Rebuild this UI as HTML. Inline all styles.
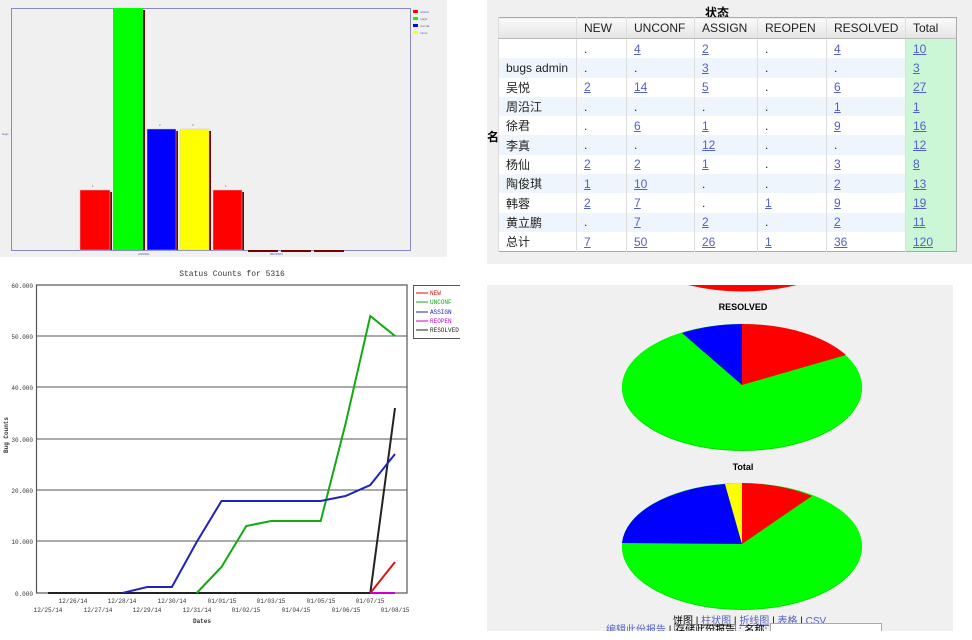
<!DOCTYPE html>
<html><head><meta charset="utf-8"><style>
body{margin:0;width:972px;height:640px;background:#fff;position:relative;overflow:hidden;font-family:"Liberation Sans","Noto Sans CJK SC",sans-serif}
.abs{position:absolute}
table{border-collapse:collapse;font-size:12px;color:#222;table-layout:fixed}
td,th{padding:0 0 0 7px;text-align:left;height:19.3px;border-left:1px solid #ddd;overflow:hidden;white-space:nowrap}
th{font-weight:normal;height:20px;background:linear-gradient(#fafafa,#e4e4e4);border-bottom:1px solid #bbb}
tr.o td{background:#eef5fd}
tr td.t{background:#ccf7d6}
a{color:#5560c8;text-decoration:underline}
</style></head><body>
<!-- top-left bar chart -->
<div class="abs" style="left:0;top:0;width:447px;height:257px;background:#f0f0f0"></div>
<svg class="abs" style="left:0;top:0" width="460" height="260">
<rect x="11.5" y="8.5" width="399" height="242" fill="none" stroke="#8888cc" stroke-width="1"/>
<g fill="#700">
<rect x="110" y="192" width="2" height="58"/><rect x="143" y="10" width="2" height="240"/><rect x="176" y="131" width="2" height="119"/><rect x="209" y="131" width="2" height="119"/><rect x="242" y="192" width="2" height="58"/>
<rect x="248" y="250" width="30" height="2"/><rect x="281" y="250" width="30" height="2"/><rect x="314" y="250" width="30" height="2"/></g>
<rect x="80" y="190" width="30" height="60" fill="#f00" stroke="#ccc" stroke-width=".5"/>
<rect x="113" y="8" width="30" height="242" fill="#0f0"/>
<rect x="147" y="129" width="29" height="121" fill="#00f" stroke="#ccc" stroke-width=".5"/>
<rect x="180" y="129" width="29" height="121" fill="#ff0" stroke="#ccc" stroke-width=".5"/>
<rect x="213" y="190" width="29" height="60" fill="#f00" stroke="#ccc" stroke-width=".5"/>
<g fill="#55a" font-size="3"><text x="92" y="187">1</text><text x="159" y="126">2</text><text x="192" y="126">2</text><text x="225" y="187">1</text><text x="138" y="255">ASSIGN</text><text x="270" y="255">REOPEN</text><text x="2" y="135">bugs</text></g>
<rect x="413" y="10" width="5" height="3" fill="#f00"/><rect x="413" y="17" width="5" height="3" fill="#0f0"/><rect x="413" y="24" width="5" height="3" fill="#00f"/><rect x="413" y="31" width="5" height="3" fill="#ff0"/>
<g fill="#55a" font-size="3"><text x="420" y="13">critical</text><text x="420" y="20">major</text><text x="420" y="27">normal</text><text x="420" y="34">minor</text></g>
</svg>
<!-- top-right table -->
<div class="abs" style="left:487px;top:0;width:485px;height:264px;background:#f0f0f0"></div>
<div class="abs" style="left:705px;top:4px;font-size:12px;font-weight:bold">状态</div>
<div class="abs" style="left:487px;top:128px;font-size:12px;font-weight:bold">名</div>
<table class="abs" style="left:498px;top:17px;width:459px;border:1px solid #aaa;background:#fff">
<colgroup><col style="width:78px"><col style="width:50px"><col style="width:68px"><col style="width:63px"><col style="width:69px"><col style="width:79px"><col></colgroup>
<tr><th></th><th>NEW</th><th>UNCONF</th><th>ASSIGN</th><th>REOPEN</th><th>RESOLVED</th><th>Total</th></tr>
<tr><td></td><td>.</td><td><a>4</a></td><td><a>2</a></td><td>.</td><td><a>4</a></td><td class="t"><a>10</a></td></tr>
<tr class="o"><td>bugs admin</td><td>.</td><td>.</td><td><a>3</a></td><td>.</td><td>.</td><td class="t"><a>3</a></td></tr>
<tr><td>吴悦</td><td><a>2</a></td><td><a>14</a></td><td><a>5</a></td><td>.</td><td><a>6</a></td><td class="t"><a>27</a></td></tr>
<tr class="o"><td>周沿江</td><td>.</td><td>.</td><td>.</td><td>.</td><td><a>1</a></td><td class="t"><a>1</a></td></tr>
<tr><td>徐君</td><td>.</td><td><a>6</a></td><td><a>1</a></td><td>.</td><td><a>9</a></td><td class="t"><a>16</a></td></tr>
<tr class="o"><td>李真</td><td>.</td><td>.</td><td><a>12</a></td><td>.</td><td>.</td><td class="t"><a>12</a></td></tr>
<tr><td>杨仙</td><td><a>2</a></td><td><a>2</a></td><td><a>1</a></td><td>.</td><td><a>3</a></td><td class="t"><a>8</a></td></tr>
<tr class="o"><td>陶俊琪</td><td><a>1</a></td><td><a>10</a></td><td>.</td><td>.</td><td><a>2</a></td><td class="t"><a>13</a></td></tr>
<tr><td>韩蓉</td><td><a>2</a></td><td><a>7</a></td><td>.</td><td><a>1</a></td><td><a>9</a></td><td class="t"><a>19</a></td></tr>
<tr class="o"><td>黄立鹏</td><td>.</td><td><a>7</a></td><td><a>2</a></td><td>.</td><td><a>2</a></td><td class="t"><a>11</a></td></tr>
<tr><td>总计</td><td><a>7</a></td><td><a>50</a></td><td><a>26</a></td><td><a>1</a></td><td><a>36</a></td><td class="t"><a>120</a></td></tr>
</table>
<!-- line chart -->
<svg class="abs" style="left:0;top:260px" width="460" height="380" font-family="Liberation Mono,monospace">
<g transform="translate(0,-260)">
<text x="232" y="276" font-size="8" text-anchor="middle" fill="#333">Status Counts for 5316</text>
<g stroke="#555" stroke-width="1"><line x1="36" y1="336" x2="407" y2="336"/><line x1="36" y1="387" x2="407" y2="387"/><line x1="36" y1="439" x2="407" y2="439"/><line x1="36" y1="490" x2="407" y2="490"/><line x1="36" y1="541" x2="407" y2="541"/></g>
<rect x="36.5" y="285" width="370.5" height="308" fill="none" stroke="#555" stroke-width="1.2"/>
<g font-size="6" fill="#333" text-anchor="end"><text x="33" y="288">60.000</text><text x="33" y="339">50.000</text><text x="33" y="390">40.000</text><text x="33" y="442">30.000</text><text x="33" y="493">20.000</text><text x="33" y="544">10.000</text><text x="33" y="596">0.000</text></g>
<text x="8" y="453" font-size="6" font-weight="bold" transform="rotate(-90 8 453)" fill="#333">Bug Counts</text>
<g font-size="6" fill="#333" text-anchor="middle"><text x="48" y="612">12/25/14</text><text x="73" y="603">12/26/14</text><text x="98" y="612">12/27/14</text><text x="122" y="603">12/28/14</text><text x="147" y="612">12/29/14</text><text x="172" y="603">12/30/14</text><text x="197" y="612">12/31/14</text><text x="222" y="603">01/01/15</text><text x="246" y="612">01/02/15</text><text x="271" y="603">01/03/15</text><text x="296" y="612">01/04/15</text><text x="321" y="603">01/05/15</text><text x="346" y="612">01/06/15</text><text x="370" y="603">01/07/15</text><text x="395" y="612">01/08/15</text>
<text x="202" y="623" font-weight="bold">Dates</text></g>
<g fill="none" stroke-width="2">
<polyline stroke="#222" points="48,593 370.3,593 395,408"/>
<polyline stroke="#1a1" points="196.7,593 221.5,567 246.3,526 271.1,521 320.7,521 345.5,424 370.3,316 395,336"/>
<polyline stroke="#22b" points="122.4,593 147.2,587 171.9,587 196.7,542 221.5,501 320.7,501 345.5,496 370.3,485 395,454"/>
<polyline stroke="#d11" points="370.3,593 395,562"/>
<polyline stroke="#c0c" points="370.3,593 395,593"/>
</g>
<rect x="413.5" y="285.5" width="50" height="53" fill="#fff" stroke="#555"/>
<g font-size="6"><line x1="416" y1="293" x2="428" y2="293" stroke="#d11"/><text x="430" y="295" fill="#d11">NEW</text>
<line x1="416" y1="302" x2="428" y2="302" stroke="#1a1"/><text x="430" y="304" fill="#1a1">UNCONF</text>
<line x1="416" y1="312" x2="428" y2="312" stroke="#22b"/><text x="430" y="314" fill="#22b">ASSIGN</text>
<line x1="416" y1="321" x2="428" y2="321" stroke="#c0c"/><text x="430" y="323" fill="#c0c">REOPEN</text>
<line x1="416" y1="330" x2="428" y2="330" stroke="#222"/><text x="430" y="332" fill="#222">RESOLVED</text></g>
</g></svg>
<!-- pies -->
<div class="abs" style="left:487px;top:285px;width:466px;height:346px;background:#f0f0f0"></div>
<svg class="abs" style="left:487px;top:280px" width="485" height="360">
<g transform="translate(-487,-280)">
<path d="M688,285 Q742,298 797,285 Z" fill="#f00"/>
<text x="743" y="310" font-size="9" font-weight="bold" text-anchor="middle" font-family="Liberation Sans,sans-serif">RESOLVED</text>
<ellipse cx="742" cy="388" rx="120" ry="63" fill="#0d0"/>
<ellipse cx="742" cy="387" rx="120" ry="63" fill="#0f0"/>
<path d="M742,385 L742,324 A120,63 0 0 1 846,355 Z" fill="#f00"/>
<path d="M742,385 L682,333 A120,63 0 0 1 742,324 Z" fill="#00f"/>
<text x="743" y="470" font-size="9" font-weight="bold" text-anchor="middle" font-family="Liberation Sans,sans-serif">Total</text>
<ellipse cx="742" cy="547" rx="120" ry="63" fill="#0d0"/>
<ellipse cx="742" cy="546" rx="120" ry="63" fill="#0f0"/>
<path d="M742,544 L742,483 A120,63 0 0 1 812,496 Z" fill="#f00"/>
<path d="M742,544 L622,543 A120,63 0 0 1 725,484 Z" fill="#00f"/>
<path d="M742,544 L725,484 A120,63 0 0 1 742,483 Z" fill="#ff0"/>
</g></svg>
<div class="abs" style="left:673px;top:612px;font-size:10px;white-space:nowrap">饼图 | <a>柱状图</a> | <a>折线图</a> | <a>表格</a> | <a>CSV</a></div>
<div class="abs" style="left:606px;top:624px;font-size:10px;white-space:nowrap;height:7px;overflow:hidden;line-height:13px"><a>编辑此份报告</a> | <span style="border:1px solid #888">存储此份报告</span> : 名称:</div>
<div class="abs" style="left:770px;top:623px;width:110px;height:10px;border:1px solid #aaa;background:#fff"></div>
<div class="abs" style="left:487px;top:631px;width:485px;height:9px;background:#fff"></div>
</body></html>
